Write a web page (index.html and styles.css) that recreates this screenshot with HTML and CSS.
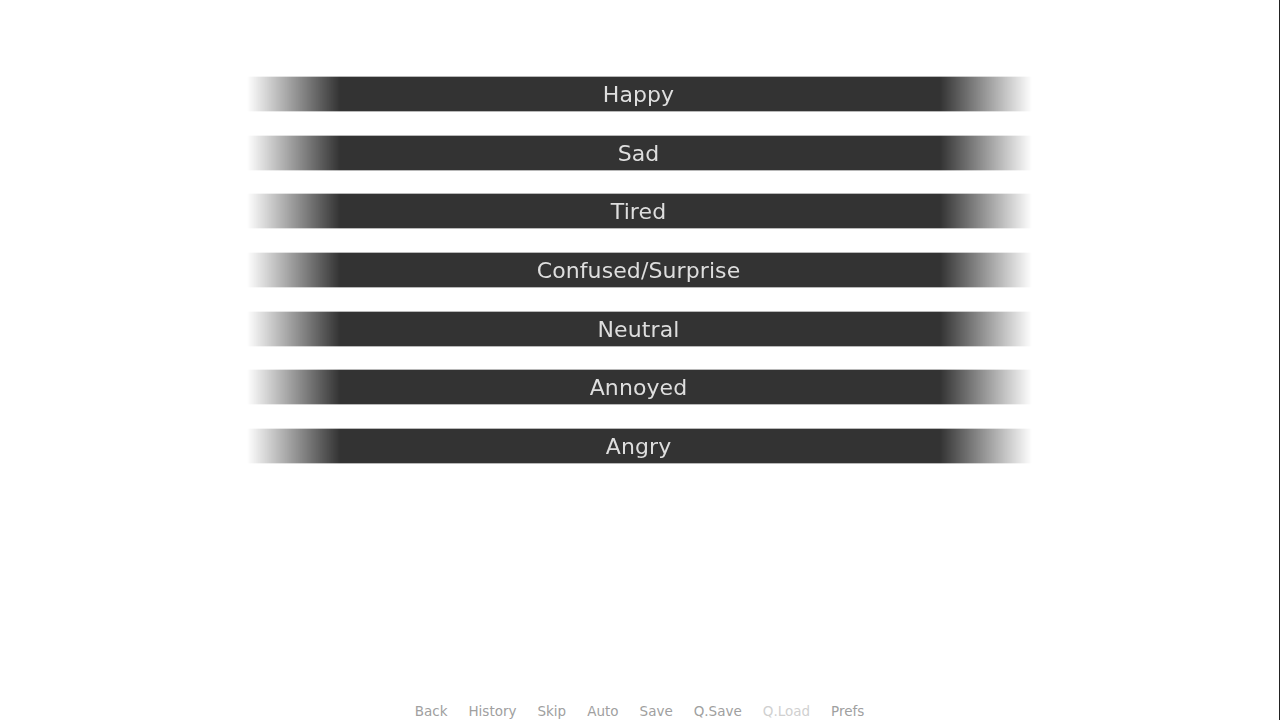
FILE: index.html
```html
<!DOCTYPE html>
<html>
<head>
<meta charset="utf-8">
<link rel="stylesheet" href="styles.css">
</head>
<body>
<div class="screen">
  <div class="choices">
    <div class="choice"><span>Happy</span></div>
    <div class="choice"><span>Sad</span></div>
    <div class="choice"><span>Tired</span></div>
    <div class="choice"><span>Confused/Surprise</span></div>
    <div class="choice"><span>Neutral</span></div>
    <div class="choice"><span>Annoyed</span></div>
    <div class="choice"><span>Angry</span></div>
  </div>
  <div class="quick">
    <span class="qb">Back</span>
    <span class="qb">History</span>
    <span class="qb">Skip</span>
    <span class="qb">Auto</span>
    <span class="qb">Save</span>
    <span class="qb">Q.Save</span>
    <span class="qb disabled">Q.Load</span>
    <span class="qb">Prefs</span>
  </div>
</div>
</body>
</html>
```
FILE: styles.css
```css
html, body {
  margin: 0;
  padding: 0;
  background: #ffffff;
}
.screen {
  width: 1279px;
  height: 720px;
  border-right: 1px solid #222;
  display: flex;
  flex-direction: column;
  align-items: center;
  font-family: "DejaVu Sans", sans-serif;
  position: relative;
  overflow: hidden;
}
.choices {
  margin-top: 76px;
  margin-left: 0;
  display: flex;
  flex-direction: column;
  gap: 22.67px;
  width: 785px;
}
.choice {
  height: 34px;
  background: #333333;
  border-top: 1px solid #b8b8b8;
  border-bottom: 1px solid #b8b8b8;
  display: flex;
  align-items: center;
  justify-content: center;
  padding-right: 2px;
  -webkit-mask-image: linear-gradient(to right, transparent 0, #000 93px, #000 calc(100% - 92px), transparent 100%);
  mask-image: linear-gradient(to right, transparent 0, #000 93px, #000 calc(100% - 92px), transparent 100%);
}
.choice span {
  color: #dedede;
  font-size: 22px;
  line-height: 34px;
  letter-spacing: 0.1px;
  position: relative;
  top: 1px;
}
.quick {
  margin-top: auto;
  height: 18px;
  display: flex;
  gap: 21px;
  font-size: 13.5px;
  color: #a0a0a0;
  line-height: 18px;
  margin-left: 0;
}
.qb.disabled {
  color: #d0d0d0;
}
```
